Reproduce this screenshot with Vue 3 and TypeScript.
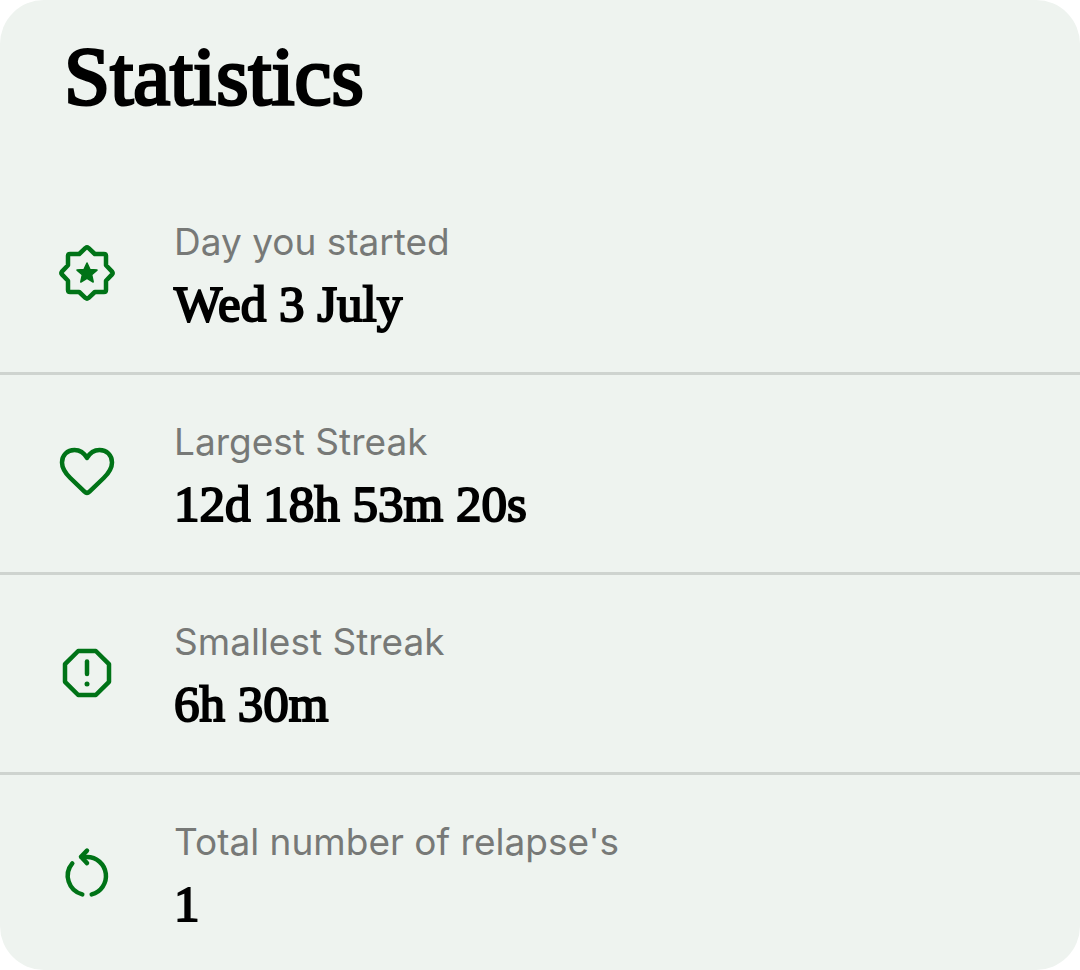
<script setup lang="ts">
type IconName = 'badge' | 'heart' | 'alert' | 'restart'

interface Stat {
  icon: IconName
  label: string
  value: string
}

const stats: Stat[] = [
  { icon: 'badge', label: 'Day you started', value: 'Wed 3 July' },
  { icon: 'heart', label: 'Largest Streak', value: '12d 18h 53m 20s' },
  { icon: 'alert', label: 'Smallest Streak', value: '6h 30m' },
  { icon: 'restart', label: "Total number of relapse's", value: '1' },
]
</script>

<template>
  <section class="card" aria-labelledby="statistics-title">
    <h1 id="statistics-title" class="title">Statistics</h1>
    <ul class="list">
      <li v-for="stat in stats" :key="stat.label" class="row">
        <svg class="icon" viewBox="8 8 64 64" aria-hidden="true">
          <template v-if="stat.icon === 'badge'">
            <path d="M38.6 14.9Q40 13.8 41.4 14.9L47.8 21H57Q59 21 59 23V32.2L65.1 38.6Q66.2 40 65.1 41.4L59 47.8V57Q59 59 57 59H47.8L41.4 65.1Q40 66.2 38.6 65.1L32.2 59H23Q21 59 21 57V47.8L14.9 41.4Q13.8 40 14.9 38.6L21 32.2V23Q21 21 23 21H32.2Z" />
            <path class="solid" d="M40 30L42.9 36.4L50 37.1L44.7 41.8L46.2 49L40 45.3L33.8 49L35.3 41.8L30 37.1L37.1 36.4Z" />
          </template>
          <path v-else-if="stat.icon === 'heart'" d="M40 25C37 19.6 32.8 17 27.5 17C20.2 17 15 22.2 15 29.4C15 35.6 18.4 40.1 23.3 45L37.5 58.6Q40 61 42.5 58.6L56.7 45C61.6 40.1 65 35.6 65 29.4C65 22.2 59.8 17 52.5 17C47.2 17 43 19.6 40 25Z" />
          <template v-else-if="stat.icon === 'alert'">
            <path d="M31.2 18H48.8L62 31.2V48.8L48.8 62H31.2L18 48.8V31.2Z" />
            <path d="M40 28.5V41" />
            <circle class="dot" cx="40" cy="51" r="2.5" />
          </template>
          <template v-else>
            <path d="M25.3 30.4A19.2 19.2 0 0 0 35.3 61.4" />
            <path d="M44.7 61.4A19 19 0 0 0 40 24H34.5" />
            <path d="M40 17.7L34 23.8L40 30.1" />
          </template>
        </svg>
        <div class="text">
          <span class="label">{{ stat.label }}</span>
          <strong class="value">{{ stat.value }}</strong>
        </div>
      </li>
    </ul>
  </section>
</template>

<style>
body {
  background: #ffffff;
}
</style>

<style scoped>
.card {
  overflow: hidden;
  border-radius: 44px;
  background: #eef3ef;
  color: #000000;
}

.title {
  margin: 0;
  padding: 28px 64px 51px;
  font: 400 83px/96px "Liberation Serif", serif;
  -webkit-text-stroke: 3px currentColor;
}

.list {
  margin: 0;
  padding: 0;
  list-style: none;
}

.row {
  display: flex;
  align-items: center;
  gap: 55px;
  padding: 45px 55px 38px;
  border-bottom: 3px solid #ced3cf;
}

.row:last-child {
  padding-bottom: 36px;
  border-bottom: 0;
}

.icon {
  flex: none;
  width: 64px;
  height: 64px;
  margin-top: -8px;
  fill: none;
  stroke: #007317;
  stroke-width: 4.5;
  stroke-linecap: round;
  stroke-linejoin: round;
}

.solid {
  fill: #007317;
  stroke-width: 1.5;
}

.dot {
  fill: #007317;
  stroke: none;
}

.text {
  display: flex;
  flex-direction: column;
  gap: 10px;
}

.label {
  color: #777977;
  font: 400 37px/44px Inter, sans-serif;
}

.value {
  font: 400 51px/60px "Liberation Serif", serif;
  -webkit-text-stroke: 2px currentColor;
}
</style>
